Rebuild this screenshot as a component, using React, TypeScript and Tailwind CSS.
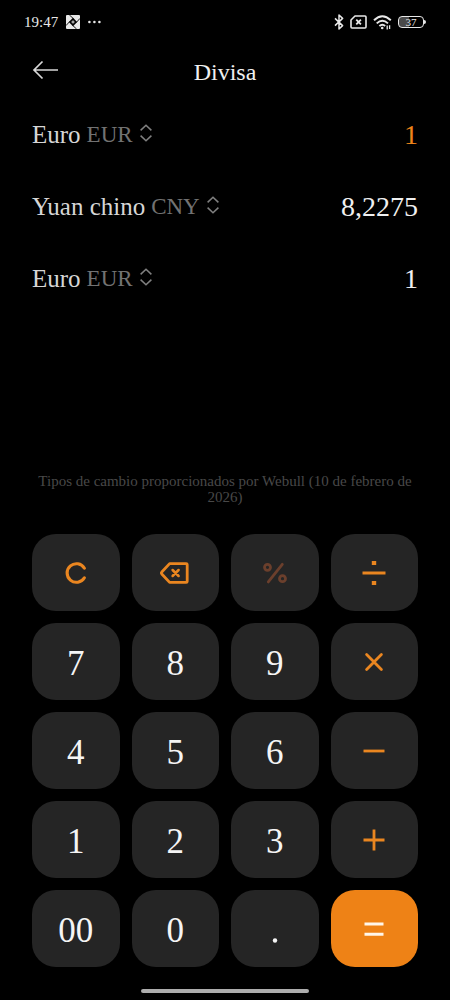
import type { ReactNode } from 'react';

interface Currency {
  id: string;
  name: string;
  code: string;
  value: string;
  active?: boolean;
}

interface Key {
  label: string;
  icon?: ReactNode;
  disabled?: boolean;
  primary?: boolean;
}

const currencies: Currency[] = [
  { id: 'first', name: 'Euro', code: 'EUR', value: '1', active: true },
  { id: 'second', name: 'Yuan chino', code: 'CNY', value: '8,2275' },
  { id: 'third', name: 'Euro', code: 'EUR', value: '1' },
];

const options = [
  { name: 'Euro', code: 'EUR' },
  { name: 'Yuan chino', code: 'CNY' },
];

function KeyIcon({ children }: { children: ReactNode }) {
  return (
    <svg
      width="32"
      height="32"
      viewBox="0 0 32 32"
      fill="none"
      stroke="currentColor"
      strokeWidth="2.8"
      aria-hidden="true"
    >
      {children}
    </svg>
  );
}

const keys: Key[] = [
  {
    label: 'Borrar todo',
    icon: (
      <KeyIcon>
        <path d="M24.4 11.2A9.3 9.3 0 1 0 24.4 20.8" strokeLinecap="round" strokeWidth="3.1" />
      </KeyIcon>
    ),
  },
  {
    label: 'Retroceso',
    icon: (
      <KeyIcon>
        <path d="M10.6 6.6H27.2a1 1 0 0 1 1 1V24.4a1 1 0 0 1-1 1H10.6L2.8 17a1.4 1.4 0 0 1 0-2Z" strokeLinejoin="round" />
        <path d="M13.6 13l6 6M19.6 13l-6 6" strokeLinecap="round" strokeWidth="2.5" />
      </KeyIcon>
    ),
  },
  {
    label: 'Porcentaje',
    disabled: true,
    icon: (
      <KeyIcon>
        <circle cx="8.5" cy="10.3" r="3" />
        <circle cx="23.5" cy="21.7" r="3" />
        <path d="M23.3 7.3L9.3 24.9" strokeLinecap="round" />
      </KeyIcon>
    ),
  },
  {
    label: 'Dividir',
    icon: (
      <KeyIcon>
        <path d="M4.5 16H27.5" strokeWidth="3" />
        <path d="M13.8 3.9h4.4v4.2h-4.4zM13.8 23.9h4.4v4.2h-4.4z" fill="currentColor" stroke="none" />
      </KeyIcon>
    ),
  },
  { label: '7' },
  { label: '8' },
  { label: '9' },
  {
    label: 'Multiplicar',
    icon: (
      <KeyIcon>
        <path d="M8.6 8.6l14.8 14.8M23.4 8.6L8.6 23.4" strokeLinecap="round" />
      </KeyIcon>
    ),
  },
  { label: '4' },
  { label: '5' },
  { label: '6' },
  {
    label: 'Restar',
    icon: (
      <KeyIcon>
        <path d="M5.5 16H26.5" />
      </KeyIcon>
    ),
  },
  { label: '1' },
  { label: '2' },
  { label: '3' },
  {
    label: 'Sumar',
    icon: (
      <KeyIcon>
        <path d="M5.5 16H26.5M16 5.5V26.5" />
      </KeyIcon>
    ),
  },
  { label: '00' },
  { label: '0' },
  {
    label: 'Coma decimal',
    icon: (
      <svg width="32" height="32" viewBox="0 0 32 32" className="text-[#f5f5f5]" aria-hidden="true">
        <circle cx="16" cy="27.5" r="2.2" fill="currentColor" />
      </svg>
    ),
  },
  {
    label: 'Igual',
    primary: true,
    icon: (
      <KeyIcon>
        <path d="M6.5 11H25.5M6.5 21.3H25.5" strokeWidth="3" />
      </KeyIcon>
    ),
  },
];

function StatusBar() {
  return (
    <div className="flex h-11 items-center justify-between px-6 text-[#e8e8e8]">
      <div className="flex items-center gap-2">
        <span className="text-[15px]">19:47</span>
        <svg width="14" height="14" viewBox="0 0 14 14" aria-hidden="true">
          <rect width="14" height="14" rx="1" fill="#e8e8e8" />
          <path d="M7 2.8L11.2 7 7 11.2 2.8 7Z" fill="#000" />
          <path d="M3.4 0L7.6 3.8M14 3.4L10.2 7.6M10.6 14L6.4 10.2M0 10.6L3.8 6.4" stroke="#000" strokeWidth="0.9" />
          <path d="M7 5.4V8.6M5.4 7H8.6" stroke="#e8e8e8" strokeWidth="0.9" />
        </svg>
        <svg width="13" height="4" viewBox="0 0 13 4" fill="currentColor" aria-hidden="true">
          <circle cx="1.4" cy="2" r="1.3" />
          <circle cx="6.4" cy="2" r="1.3" />
          <circle cx="11.4" cy="2" r="1.3" />
        </svg>
      </div>

      <div className="flex items-center gap-1.5">
        {/* Bluetooth */}
        <svg width="10" height="16" viewBox="0 0 10 16" fill="none" stroke="currentColor" strokeWidth="1.5" aria-hidden="true">
          <path d="M1 4.4L8.6 11.6 5 15V1l3.6 3.4L1 11.6" strokeLinejoin="round" />
        </svg>
        {/* SIM */}
        <svg width="17" height="14" viewBox="0 0 17 14" fill="none" stroke="currentColor" aria-hidden="true">
          <path d="M5 1H15a1 1 0 0 1 1 1V12a1 1 0 0 1-1 1H2a1 1 0 0 1-1-1V5Z" strokeWidth="1.6" strokeLinejoin="round" />
          <path d="M6.3 4.7l4.6 4.6M10.9 4.7L6.3 9.3" strokeWidth="1.8" />
        </svg>
        {/* Wi-Fi */}
        <svg width="19" height="15" viewBox="0 0 19 15" fill="none" stroke="currentColor" aria-hidden="true">
          <path d="M1 5.3Q9.3-2.6 17.8 5.3M3.7 8.4Q9.3 3.2 15 8.4M6.4 11Q9.3 8.5 12.2 11" strokeWidth="1.9" />
          <circle cx="9.2" cy="13" r="1.3" fill="currentColor" stroke="none" />
          <path d="M14.2 14.4V10.6M16.6 10.3V14" strokeWidth="1.3" />
        </svg>
        {/* Battery */}
        <div className="flex items-center">
          <div className="flex h-3 w-[26px] items-center justify-center rounded border border-[#e8e8e8] bg-linear-to-r from-[#4a4a4a] from-40% to-transparent to-40%">
            <span className="text-[11px] leading-none">37</span>
          </div>
          <div className="h-1 w-0.5 rounded-r bg-[#e8e8e8]" />
        </div>
      </div>
    </div>
  );
}

function CurrencyRow({ currency }: { currency: Currency }) {
  return (
    <div className="flex h-18 items-center justify-between gap-4">
      <label className="relative flex shrink-0 items-center">
        <span className="text-[25px] leading-8 text-[#d6d6d6]">{currency.name}</span>
        <span className="ml-1.5 text-[23px] leading-8 text-[#727272]">{currency.code}</span>
        <svg
          width="14"
          height="18"
          viewBox="0 0 14 18"
          fill="none"
          stroke="#808080"
          strokeWidth="1.5"
          className="mb-1 ml-1.5"
          aria-hidden="true"
        >
          <path d="M1.6 6.4L7 1.2 12.4 6.4M1.6 11.6L7 16.8 12.4 11.6" />
        </svg>
        <select
          aria-label={`Divisa ${currency.name}`}
          defaultValue={currency.code}
          className="absolute inset-0 w-full cursor-pointer opacity-0"
        >
          {options.map((option) => (
            <option key={option.code} value={option.code}>
              {option.name} {option.code}
            </option>
          ))}
        </select>
      </label>
      <input
        id={currency.id}
        type="text"
        inputMode="none"
        readOnly
        aria-label={`Importe en ${currency.code}`}
        value={currency.value}
        className={`min-w-0 flex-1 bg-transparent text-right text-[28px] leading-9 outline-none ${
          currency.active ? 'text-[#ee8419]' : 'text-[#f0f0f0]'
        }`}
      />
    </div>
  );
}

function Keypad() {
  return (
    <div className="grid grid-cols-4 gap-3">
      {keys.map((key) => (
        <button
          key={key.label}
          type="button"
          aria-label={key.label}
          disabled={key.disabled}
          className={`flex h-[77px] items-center justify-center rounded-3xl text-[35px] leading-10 ${
            key.primary ? 'bg-[#ee8216] text-[#fff6ea]' : 'bg-[#252525]'
          } ${key.disabled ? 'text-[#6b3f2c]' : ''} ${
            !key.primary && !key.disabled ? (key.icon ? 'text-[#ea8620]' : 'text-[#f5f5f5]') : ''
          }`}
        >
          {key.icon ? key.icon : <span className="pt-1">{key.label}</span>}
        </button>
      ))}
    </div>
  );
}

export default function App() {
  return (
    <div className="flex min-h-screen flex-col bg-black font-['Liberation_Serif',serif]">
      <StatusBar />

      {/* Header */}
      <header className="grid h-[55px] grid-cols-[1fr_auto_1fr] items-center px-8">
        <button type="button" aria-label="Atrás" className="w-fit pb-1 text-[#d8d8d8]">
          <svg width="28" height="20" viewBox="0 0 28 20" fill="none" stroke="currentColor" strokeWidth="1.7" aria-hidden="true">
            <path d="M26 10H2M10.5 1.5L2 10l8.5 8.5" />
          </svg>
        </button>
        <h1 className="text-2xl text-[#f0f0f0]">Divisa</h1>
      </header>

      <main className="flex flex-1 flex-col px-8">
        {currencies.map((currency) => (
          <CurrencyRow key={currency.id} currency={currency} />
        ))}

        <p className="mt-auto mb-[29px] text-center text-[15px] leading-4 text-[#484848]">
          Tipos de cambio proporcionados por Webull (10 de febrero de 2026)
        </p>

        <Keypad />
      </main>

      {/* Home indicator */}
      <div className="flex h-[33px] items-end justify-center pb-[7px]">
        <div className="h-1 w-[168px] rounded-full bg-[#adadad]" />
      </div>
    </div>
  );
}
